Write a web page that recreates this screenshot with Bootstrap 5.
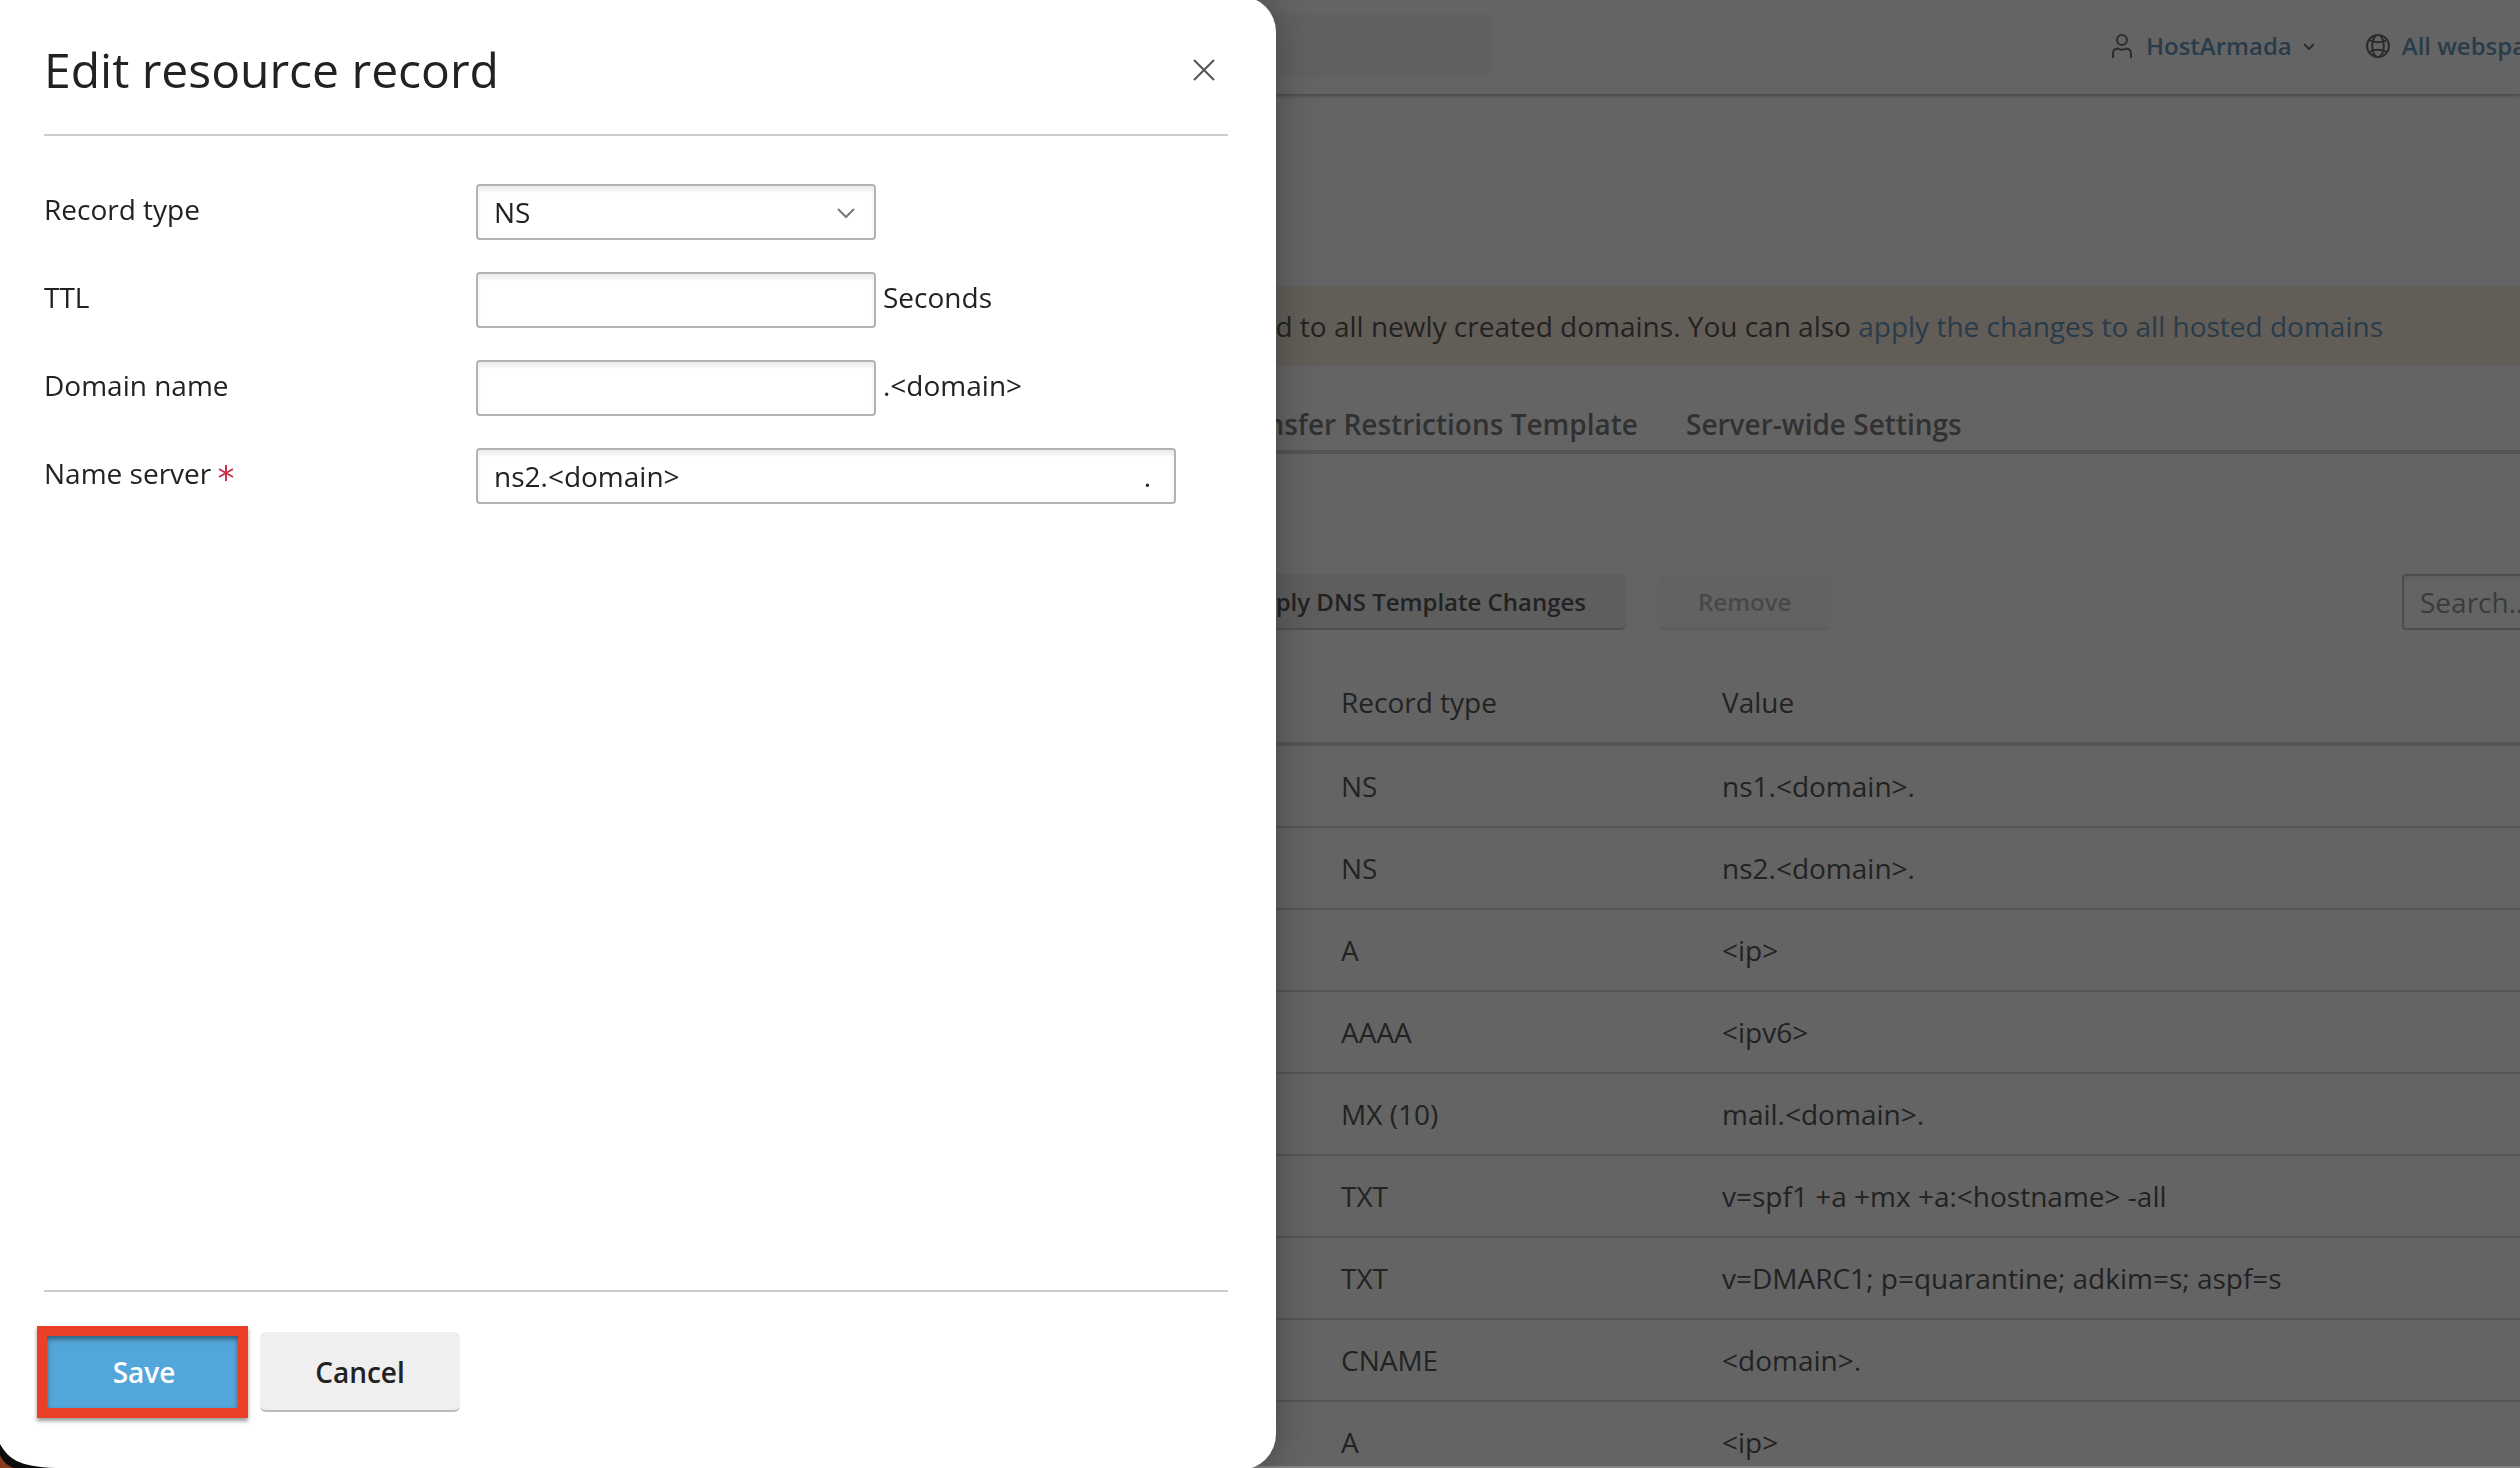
<!DOCTYPE html>
<html lang="en">
<head>
<meta charset="utf-8">
<meta name="viewport" content="width=device-width, initial-scale=1">
<title>Edit resource record</title>
<link href="https://cdn.jsdelivr.net/npm/bootstrap@5.3.0/dist/css/bootstrap.min.css" rel="stylesheet">
<style>
  body { font-family: "Open Sans", sans-serif; font-size: 28px; line-height: 40px; color: #222; background: #fff; height: 100vh; overflow: hidden; }
  a { color: #3678aa; text-decoration: none; }
  .topbar { height: 94px; box-shadow: 0 2px 4px rgba(0,0,0,.4); }
  .topbar-lead { width: 1492px; }
  .quick-find { width: 640px; height: 64px; margin-top: 14px; border: 0; border-radius: 8px; background: #f6f6f6; }
  .account { width: 408px; font-size: 24px; font-weight: 600; white-space: nowrap; overflow: hidden; padding-bottom: 2px; }
  .account svg { flex-shrink: 0; }
  .account .person { margin-right: 14px; }
  .account .globe { margin-left: 52px; margin-right: 12px; }
  .account .chevron { margin-left: 12px; }
  .page-head { height: 192px; }
  .notice { background: #f7e6d2; padding: 20px 137px 20px 0; white-space: nowrap; }
  .tabs { height: 88px; border-bottom: 4px solid #c8c8c8; padding-top: 38px; gap: 48px; font-weight: 600; white-space: nowrap; }
  .tabs a { color: #555; }
  .tabs-lead { width: 1638px; }
  .toolbar-row { padding-top: 120px; gap: 32px; }
  .tool-lead { width: 1626px; }
  .tool { height: 56px; padding: 2px 40px 0; font-size: 24px; font-weight: 600; line-height: 52px; border: 0; border-bottom: 2px solid #bbb; border-radius: 6px; background: #ebebeb; color: #222; }
  .tool:disabled { background: #f8f8f8; color: #a0a0a0; border-color: #e4e4e4; opacity: 1; }
  .field { height: 56px; border: 2px solid #b3b3b3; border-radius: 4px; padding: 0 16px; font-size: 28px; line-height: 40px; color: #222; background-color: #fff; box-shadow: inset 0 4px 4px rgba(0,0,0,.08); }
  .field::placeholder { color: #777; opacity: 1; }
  .list-find { width: 118px; border-right: 0; border-radius: 4px 0 0 4px; padding-right: 0; }
  .records { margin-top: 46px; table-layout: fixed; width: 100%; }
  .records th, .records td { font-weight: 400; padding: 20px 0; border-bottom: 2px solid #c8c8c8; }
  .records th { border-bottom-width: 4px; padding: 6px 0 20px; }
  .col-host { width: 1341px; }
  .col-type { width: 381px; }
  .offcanvas-backdrop.show { background: #222; opacity: .7; }
  .offcanvas.drawer { width: 1276px; top: -4px; bottom: -2px; border: 0; border-radius: 0 36px 36px 0; padding: 4px 48px 2px 44px; background: #fff; color: #222; box-shadow: 0 0 40px rgba(0,0,0,.3); outline: 0; }
  .drawer-head { height: 136px; padding-top: 6px; border-bottom: 2px solid #ccc; }
  .drawer-title { font-size: 48px; line-height: 64px; font-weight: 400; margin: 0; }
  .close-btn { border: 0; background: none; padding: 0; margin-right: 12px; width: 24px; height: 24px; display: flex; }
  .form-area { padding-top: 48px; gap: 32px; }
  .form-line { height: 56px; }
  .form-line > label { width: 432px; padding-top: 5px; }
  .req { display: inline-block; vertical-align: 2px; margin-left: -1px; }
  .unit { padding-top: 5px; margin-left: 7px; }
  .short { width: 400px; }
  .long { width: 700px; }
  .pick { appearance: none; }
  .pick-arrow { right: 21px; top: 23px; pointer-events: none; }
  .end-dot { right: 25px; top: 8px; }
  .drawer-foot { height: 178px; border-top: 2px solid #ccc; padding-top: 40px; gap: 16px; }
  .act { width: 200px; height: 80px; border: 0; border-bottom: 2px solid #bbb; border-radius: 6px; font-size: 28px; font-weight: 600; padding: 2px 0 0; }
  .save { background: #53a6d9; color: #fff; border-color: #4289b5; }
  .cancel { background: #efefef; color: #222; }
  .ring { left: -7px; right: -4px; top: -6px; bottom: -6px; border: 10px solid #eb4027; box-shadow: 0 3px 4px rgba(0,0,0,.4), inset 0 3px 5px rgba(0,0,0,.45); pointer-events: none; }
  .corner { left: 0; bottom: 0; z-index: 1050; }
  .edge { left: 1252px; right: 0; bottom: 0; height: 2px; background: #858585; z-index: 1042; }
</style>
<script src="https://cdn.jsdelivr.net/npm/bootstrap@5.3.0/dist/js/bootstrap.bundle.min.js"></script>
</head>
<body>
<header class="topbar d-flex justify-content-between">
  <div class="topbar-lead d-flex justify-content-end"><input class="quick-find" type="search" aria-label="Find"></div>
  <nav class="account d-flex align-items-center">
    <svg class="person" width="20" height="24" viewBox="0 0 20 24" fill="none" stroke="#444" stroke-width="2"><circle cx="10" cy="6" r="5"/><path d="M1 24v-4c0-4 2-5.500 5-5.500 1.500 1.500 6.500 1.500 8 0 3 0 5 1.500 5 5.500v4"/></svg>
    <a href="#">HostArmada</a>
    <svg class="chevron" width="10" height="8" viewBox="0 0 10 8" fill="none" stroke="#444" stroke-width="2"><path d="M0 2l5 5 5-5"/></svg>
    <svg class="globe" width="24" height="24" viewBox="0 0 24 24" fill="none" stroke="#444" stroke-width="2"><circle cx="12" cy="12" r="11"/><path d="M10 1c-5 6-5 16 0 22M14 1c5 6 5 16 0 22M3 6c5 3 13 3 18 0M3 18c5-3 13-3 18 0"/></svg>
    <a href="#">All webspaces</a>
  </nav>
</header>
<main>
  <div class="page-head"></div>
  <div class="notice d-flex justify-content-end"><span>applied to all newly created domains. You can also <a href="#">apply the changes to all hosted domains</a></span></div>
  <nav class="tabs d-flex">
    <div class="tabs-lead text-end"><a href="#">Transfer Restrictions Template</a></div>
    <a href="#">Server-wide Settings</a>
  </nav>
  <div class="toolbar-row d-flex">
    <div class="tool-lead d-flex justify-content-end"><button type="button" class="tool">Apply DNS Template Changes</button></div>
    <button type="button" class="tool" disabled>Remove</button>
    <input class="field list-find ms-auto" type="text" placeholder="Search..." aria-label="Search">
  </div>
  <table class="records">
    <colgroup><col class="col-host"><col class="col-type"><col></colgroup>
    <thead><tr><th></th><th>Record type</th><th>Value</th></tr></thead>
    <tbody>
      <tr><td></td><td>NS</td><td>ns1.&lt;domain&gt;.</td></tr>
      <tr><td></td><td>NS</td><td>ns2.&lt;domain&gt;.</td></tr>
      <tr><td></td><td>A</td><td>&lt;ip&gt;</td></tr>
      <tr><td></td><td>AAAA</td><td>&lt;ipv6&gt;</td></tr>
      <tr><td></td><td>MX (10)</td><td>mail.&lt;domain&gt;.</td></tr>
      <tr><td></td><td>TXT</td><td>v=spf1 +a +mx +a:&lt;hostname&gt; -all</td></tr>
      <tr><td></td><td>TXT</td><td>v=DMARC1; p=quarantine; adkim=s; aspf=s</td></tr>
      <tr><td></td><td>CNAME</td><td>&lt;domain&gt;.</td></tr>
      <tr><td></td><td>A</td><td>&lt;ip&gt;</td></tr>
    </tbody>
  </table>
</main>
<div class="offcanvas-backdrop show"></div>
<div class="edge position-fixed"></div>
<form class="offcanvas offcanvas-start show drawer d-flex flex-column" data-bs-backdrop="false" data-bs-scroll="true" tabindex="-1" aria-labelledby="drawerTitle">
  <div class="drawer-head d-flex align-items-center justify-content-between flex-shrink-0">
    <h1 class="drawer-title" id="drawerTitle">Edit resource record</h1>
    <button type="button" class="close-btn" aria-label="Close"><svg width="24" height="24" viewBox="0 0 24 24" fill="none" stroke="#555" stroke-width="2"><path d="M2 2l20 20M22 2L2 22"/></svg></button>
  </div>
  <div class="form-area d-flex flex-column flex-grow-1">
    <div class="form-line d-flex"><label for="rtype">Record type</label>
      <div class="position-relative short"><select id="rtype" class="field pick w-100"><option>NS</option></select>
        <svg class="pick-arrow position-absolute" width="18" height="12" viewBox="0 0 18 12" fill="none" stroke="#777" stroke-width="2"><path d="M1 2l8 8 8-8"/></svg></div></div>
    <div class="form-line d-flex"><label for="ttl">TTL</label><input id="ttl" type="text" class="field short"><span class="unit">Seconds</span></div>
    <div class="form-line d-flex"><label for="dname">Domain name</label><input id="dname" type="text" class="field short"><span class="unit">.&lt;domain&gt;</span></div>
    <div class="form-line d-flex"><label for="nserver">Name server <svg class="req" width="16" height="18" viewBox="0 0 16 18" stroke="#c9304a" stroke-width="2" role="img" aria-label="required"><path d="M8 1v16M1 5l14 8M15 5L1 13"/></svg></label>
      <div class="position-relative long"><input id="nserver" type="text" class="field w-100" value="ns2.&lt;domain&gt;"><span class="end-dot position-absolute">.</span></div></div>
  </div>
  <div class="drawer-foot d-flex align-items-start flex-shrink-0">
    <div class="position-relative d-flex"><button type="submit" class="act save">Save</button><span class="ring position-absolute"></span></div>
    <button type="button" class="act cancel">Cancel</button>
  </div>
</form>
<svg class="corner position-fixed" width="56" height="24" viewBox="0 0 56 24"><path d="M0 0C8 14 18 23 56 24H0Z" fill="#0c0c0c"/><path d="M0 11C3 18 8 22 14 24H0Z" fill="#8a3a1e"/></svg>
</body>
</html>
